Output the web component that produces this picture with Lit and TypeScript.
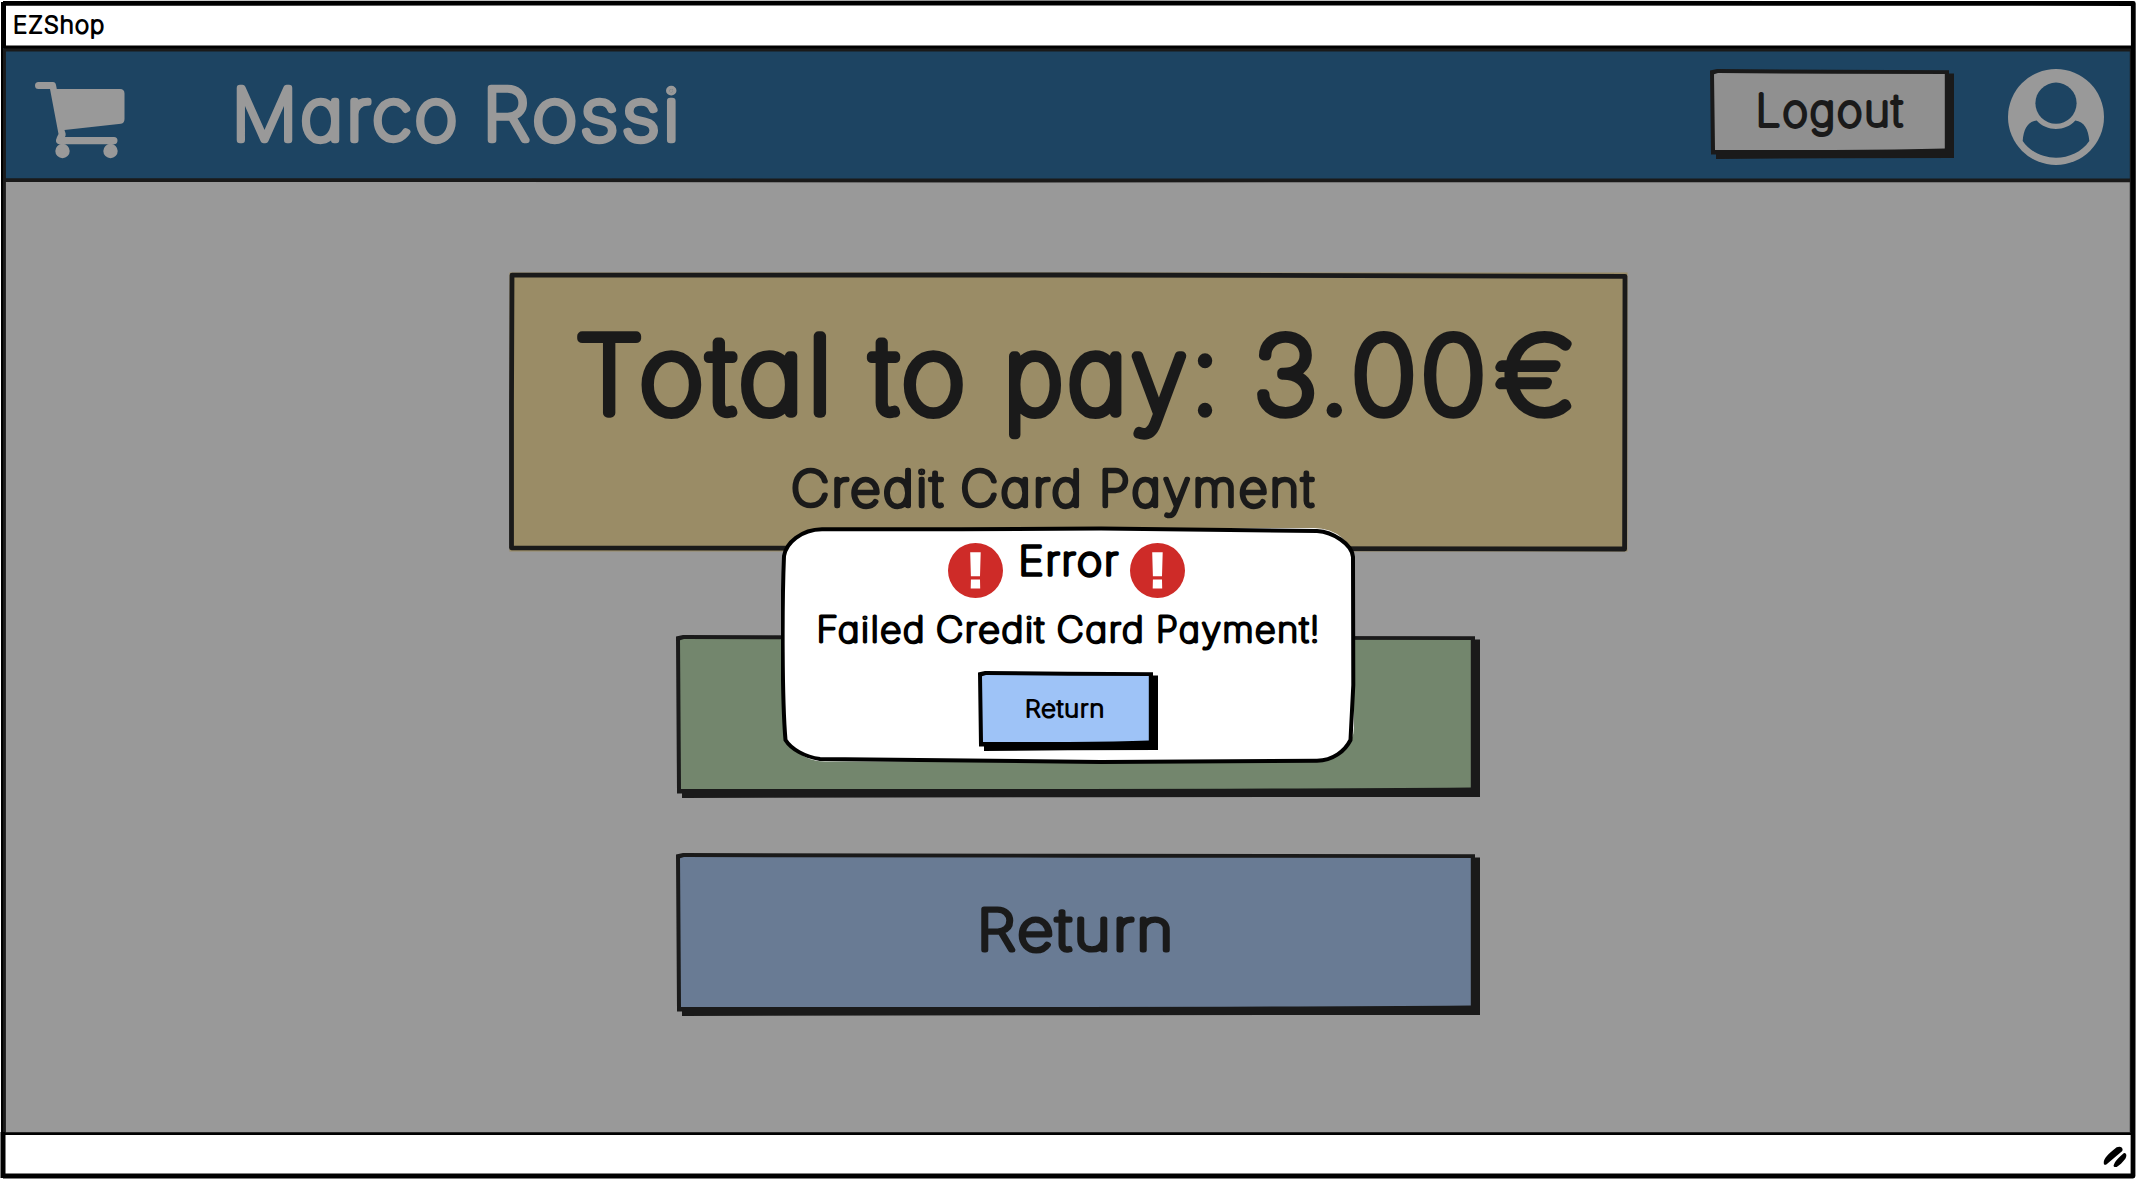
import { LitElement, html, svg, css } from "lit";
import { customElement, property } from "lit/decorators.js";

type Word = [text: string, x: number, width: number];

const FAMILY = 'Inter, "Open Sans", sans-serif';
const STROKE = 0.09;
const CAP = 0.727;
const TRACKING = 0.045;
const pen = document.createElement("canvas").getContext("2d")!;

/** A line of marker lettering. Its box is the cap height; words sit at fixed offsets along the line. */
@customElement("sketch-text")
export class SketchText extends LitElement {
  static styles = css`
    :host { display: block; flex: none; }
    .line { display: block; overflow: visible; }
    .ink {
      font-family: Inter, "Open Sans", sans-serif;
      font-weight: 100;
      font-feature-settings: "cv11" 1;
      letter-spacing: 0.045em;
      fill: currentColor;
      stroke: currentColor;
      stroke-linejoin: round;
      stroke-linecap: round;
    }
  `;
  @property({ attribute: false }) words: Word[] = [];
  @property({ type: Number }) cap = 20;

  render() {
    const size = this.cap / (CAP + STROKE);
    const s = size * STROKE;
    const last = this.words[this.words.length - 1];
    const width = last ? last[1] + last[2] : 0;
    pen.font = `100 ${size}px ${FAMILY}`;
    return html`<svg class="line" width=${width} height=${this.cap}>
      <text class="ink" font-size=${size} stroke-width=${s} y=${this.cap - s / 2}>${this.words.map(([text, x, w]) => {
        const m = pen.measureText(text);
        const gap = TRACKING * size;
        const n = text.length;
        const k = (w - s) / (m.actualBoundingBoxLeft + m.actualBoundingBoxRight + gap * (n - 1));
        return svg`<tspan x=${x + s / 2 + m.actualBoundingBoxLeft * k} textLength=${(m.width + gap * n) * k} lengthAdjust="spacingAndGlyphs">${text}</tspan>`;
      })}</text>
    </svg>`;
  }
}

/** Hand-drawn button: uneven outline with a solid drop edge at the right and the bottom. */
@customElement("sketch-button")
export class SketchButton extends LitElement {
  static styles = css`
    :host { display: grid; flex: none; }
    .shape, .content { grid-area: 1 / 1; }
    .shape { display: block; }
    .content { display: flex; justify-content: center; align-items: flex-start; }
    .edge { fill: var(--edge, #1a1a1a); }
    .face { fill: var(--face, #909090); }
  `;
  @property({ type: Number }) w = 100;
  @property({ type: Number }) h = 50;

  render() {
    const { w, h } = this;
    const edge = `M0 1.5L7 0L${w / 2} 0.8L${w - 5} 1.3V4.4H${w}V${h - 1}L${w / 2} ${h - 0.8}L6 ${h}V${h - 4.5}H1Z`;
    const face = `M4 5.2L8 4.1L${w / 2} 4.7L${w - 9.2} 5V${h - 10.4}Q${w * 0.78} ${h - 9.2} ${w / 2} ${h - 9}H5Z`;
    return html`<svg class="shape" width=${w} height=${h}>
        <path class="edge" d=${edge}></path><path class="face" d=${face}></path>
      </svg>
      <div class="content"><slot></slot></div>`;
  }
}

const cart = html`<svg class="cart" width="90" height="77" viewBox="0 0 90 77">
  <g fill="#999">
    <path d="M3.5 0H18Q20.5 0 21 3L21.8 7H85Q89.5 7 89.5 11.5V37Q89.5 41 86 41.8L29.5 48L30.6 51.5Q31 53 30 55H79Q82.5 55 82.5 58.6Q82.5 62.300 79 62.300H25Q20.500 62 21 58Q21.500 55.500 23.500 52L15 7H3.500Q0 7 0 3.500Q0 0 3.500 0Z"/>
    <circle cx="27.500" cy="69" r="7.200"/><circle cx="75.500" cy="69" r="7.200"/>
  </g></svg>`;

const user = html`<svg class="user" width="96" height="96" viewBox="0 0 96 96">
  <circle cx="48" cy="48" r="48" fill="#999"/>
  <g fill="#1d4462"><circle cx="48" cy="34.200" r="20.600"/>
  <path d="M14.700 72C15.500 60 20 52.500 28.700 51.400C38.500 62.700 57.500 62.700 67.300 51.400C76 52.500 80.500 60 81.300 72C66 94.300 30 94.300 14.700 72Z"/></g></svg>`;

const alertIcon = html`<svg class="alert" width="55" height="55" viewBox="0 0 55 55">
  <circle cx="27.500" cy="27.500" r="27.500" fill="#ce2b28"/>
  <path d="M22.200 9.300H32.700L32 33.200H22.900ZM22.900 36.500H32L32.200 45.500H22.700Z" fill="#fff"/></svg>`;

@customElement("app-root")
export class AppRoot extends LitElement {
  static styles = css`
    :host { display: block; }
    .window {
      position: relative; display: flex; flex-direction: column;
      width: 2136px; height: 1180px; overflow: hidden;
      background: #fff; color: #1a1a1a;
    }
    .frame { position: absolute; inset: 0; pointer-events: none; }
    .title { display: flex; flex: none; height: 48px; box-sizing: border-box; padding: 15px 0 0 14px; color: #000; }
    .header {
      display: flex; flex: none; align-items: flex-start; height: 134px; box-sizing: border-box;
      margin: 0 3px; background: #1d4462; padding: 21px 29px 0 32px;
    }
    .cart { flex: none; margin-top: 13px; }
    .name { margin: 16px auto 0 112px; color: #999; }
    .logout-label { margin: 24px 0 0 -3px; }
    .user { flex: none; margin-left: 54px; }
    .main {
      display: flex; flex-direction: column; align-items: center; flex: none; margin: 0 3px;
      height: 952px; box-sizing: border-box; padding-top: 90px; background: #999;
    }
    .card { display: grid; flex: none; width: 1119px; height: 280px; }
    .card-shape, .card-body { grid-area: 1 / 1; }
    .card-body { display: flex; flex-direction: column; align-items: flex-start; padding-top: 60px; }
    .total { margin-left: 68px; }
    .method { margin: 50px 0 0 283px; }
    .choice { margin: 82.500px 0 0 20px; }
    .choice + .choice { margin-top: 55px; }
    .return-label { margin: 54px 0 0 -5px; }
    .footer { display: flex; flex: 1; justify-content: flex-end; padding: 12px 9px 0 0; }
    .modal {
      position: absolute; left: 781px; top: 525px; width: 575px; height: 240px; display: grid;
      color: #000; --edge: #000; --face: #9ec3f7;
    }
    .modal-shape, .modal-body { grid-area: 1 / 1; }
    .modal-body { display: flex; flex-direction: column; align-items: center; padding-top: 17.500px; }
    .heading { display: flex; align-items: flex-start; margin-right: 4px; }
    .error { margin: 2px 11px 0 18px; }
    .message { margin: 17.500px 1px 0 0; }
    .dismiss { margin: 27px 2px 0 0; }
    .dismiss-label { margin: 28px 0 0 -5px; }
  `;

  render() {
    return html`<div class="window">
      <div class="title"><sketch-text .words=${[["EZShop", 0, 90.5]]} .cap=${19}></sketch-text></div>
      <header class="header">
        ${cart}
        <sketch-text class="name" .words=${[["Marco", 0, 219], ["Rossi", 251, 189]]} .cap=${58}></sketch-text>
        <sketch-button .w=${244} .h=${90}>
          <sketch-text class="logout-label" .words=${[["Logout", 0, 146]]} .cap=${35}></sketch-text>
        </sketch-button>
        ${user}
      </header>
      <main class="main">
        <section class="card">
          <svg class="card-shape" width="1119" height="280">
            <rect x="0.500" y="0.500" width="1118" height="279" fill="#9a8c66"/>
            <path d="M3 3.200L560 3L1116 4.300L1115.600 277L560 276.500L2.500 275.800L2.500 130Z" fill="none" stroke="#1a1a1a" stroke-width="4.800" stroke-linejoin="round"/>
          </svg>
          <div class="card-body">
            <sketch-text class="total" .words=${[["Total", 0, 249], ["to", 289.5, 97], ["pay:", 432, 203], ["3.00", 680, 226], ["€", 918, 77]]} .cap=${86}></sketch-text>
            <sketch-text class="method" .words=${[["Credit", 0, 152], ["Card", 169.5, 117.5], ["Payment", 310, 213]]} .cap=${40}></sketch-text>
          </div>
        </section>
        <sketch-button class="choice" style="--face:#73866d" .w=${804} .h=${163}></sketch-button>
        <sketch-button class="choice" style="--face:#697b94" .w=${804} .h=${163}>
          <sketch-text class="return-label" .words=${[["Return", 0, 189]]} .cap=${46}></sketch-text>
        </sketch-button>
      </main>
      <footer class="footer">
        <svg width="24" height="22" viewBox="339 108 72 66">
          <path d="M342 163C338 150 350 135 380 112C392 106 402 114 396 124L350 163Q345 166 342 163ZM371 166C375 152 388 142 402 129C410 128 411 138 406 146C398 157 388 166 380 171C373 172 370 170 371 166Z"/>
        </svg>
      </footer>
      <svg class="frame" width="2136" height="1180">
        <g fill="none" stroke="#1a1a1a" stroke-width="3.800">
          <path d="M4 49.700H2132M4 179.900L1000 180.500L2132 180.300M4 49V1132M2131.700 49V1132"/>
        </g>
        <g fill="none" stroke="#000">
          <path d="M3 3.300L1068 3L2133.300 3.500L2133.600 600L2133 1176L1068 1176L3 1176" stroke-width="4.800" stroke-linejoin="round"/>
          <path d="M3.500 2V48M3 1132V1178" stroke-width="5"/>
          <path d="M2 48V1132" stroke-width="2"/>
          <path d="M3 47H2133M3 1133.700H2133" stroke-width="2.800"/>
        </g>
      </svg>
      <div class="modal">
        <svg class="modal-shape" width="575" height="240">
          <rect x="4" y="3" width="569" height="233.500" rx="40" ry="34" fill="#fff"/>
          <path d="M3 31C5 18 20 4.500 41 4.200L180 4.300L320 3.500L536 6C552 7 571 19 572 32L572.300 160L569.500 215C564 226 552 235.500 536 235.800L320 237L39 234C24 232 10 224 4.500 215C1 175 1 80 3 31Z" fill="#fff" stroke="#000" stroke-width="4"/>
        </svg>
        <div class="modal-body">
          <div class="heading">
            ${alertIcon}
            <sketch-text class="error" .words=${[["Error", 0, 98]]} .cap=${32}></sketch-text>
            ${alertIcon}
          </div>
          <sketch-text class="message" .words=${[["Failed", 0, 104.5], ["Credit", 118.5, 108.5], ["Card", 239.5, 84], ["Payment!", 339.5, 160]]} .cap=${28.5}></sketch-text>
          <sketch-button class="dismiss" .w=${180} .h=${80}>
            <sketch-text class="dismiss-label" .words=${[["Return", 0, 77.5]]} .cap=${19}></sketch-text>
          </sketch-button>
        </div>
      </div>
    </div>`;
  }
}
